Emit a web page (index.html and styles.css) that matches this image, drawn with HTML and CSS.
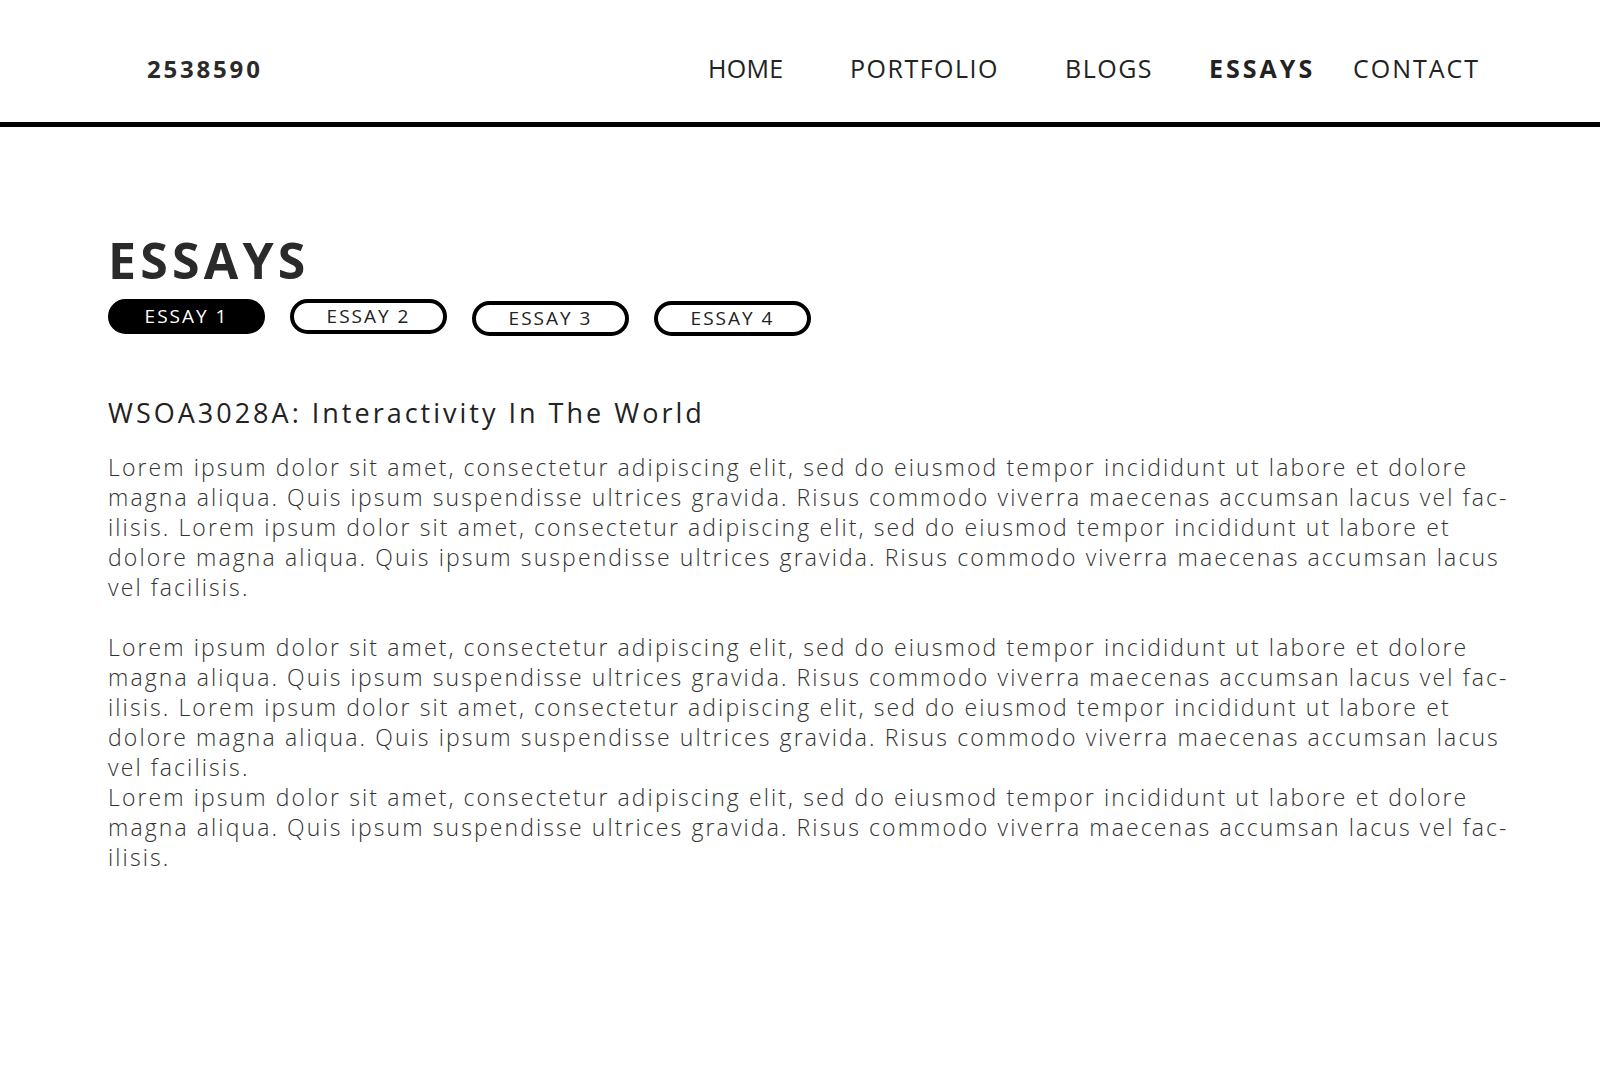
FILE: index.html
```html
<!DOCTYPE html>
<html lang="en">
<head>
<meta charset="utf-8">
<title>Essays</title>
<link rel="stylesheet" href="styles.css">
</head>
<body>
<header class="site-header">
  <div class="logo">2538590</div>
  <nav class="nav">
    <a class="nav-link" href="#">HOME</a>
    <a class="nav-link" href="#">PORTFOLIO</a>
    <a class="nav-link" href="#">BLOGS</a>
    <a class="nav-link nav-link--active" href="#">ESSAYS</a>
    <a class="nav-link" href="#">CONTACT</a>
  </nav>
</header>
<main class="content">
  <h1 class="page-title">ESSAYS</h1>
  <div class="tabs">
    <button class="tab tab--active">ESSAY 1</button>
    <button class="tab">ESSAY 2</button>
    <button class="tab tab--low">ESSAY 3</button>
    <button class="tab tab--low">ESSAY 4</button>
  </div>
  <h2 class="essay-title">WSOA3028A: Interactivity In The World</h2>
  <p class="essay-text essay-text--spaced">Lorem ipsum dolor sit amet, consectetur adipiscing elit, sed do eiusmod tempor incididunt ut labore et dolore<br>magna aliqua. Quis ipsum suspendisse ultrices gravida. Risus commodo viverra maecenas accumsan lacus vel fac-<br>ilisis. Lorem ipsum dolor sit amet, consectetur adipiscing elit, sed do eiusmod tempor incididunt ut labore et<br>dolore magna aliqua. Quis ipsum suspendisse ultrices gravida. Risus commodo viverra maecenas accumsan lacus<br>vel facilisis.</p>
  <p class="essay-text">Lorem ipsum dolor sit amet, consectetur adipiscing elit, sed do eiusmod tempor incididunt ut labore et dolore<br>magna aliqua. Quis ipsum suspendisse ultrices gravida. Risus commodo viverra maecenas accumsan lacus vel fac-<br>ilisis. Lorem ipsum dolor sit amet, consectetur adipiscing elit, sed do eiusmod tempor incididunt ut labore et<br>dolore magna aliqua. Quis ipsum suspendisse ultrices gravida. Risus commodo viverra maecenas accumsan lacus<br>vel facilisis.</p>
  <p class="essay-text">Lorem ipsum dolor sit amet, consectetur adipiscing elit, sed do eiusmod tempor incididunt ut labore et dolore<br>magna aliqua. Quis ipsum suspendisse ultrices gravida. Risus commodo viverra maecenas accumsan lacus vel fac-<br>ilisis.</p>
</main>
</body>
</html>
```
FILE: styles.css
```css
* { box-sizing: border-box; }
body {
  margin: 0;
  font-family: "Open Sans", "Liberation Sans", sans-serif;
  background: #fff;
  color: #222;
}
.site-header {
  display: flex;
  align-items: center;
  height: 127px;
  padding: 20px 0 5px 147px;
  border-bottom: 5px solid #000;
}
.logo {
  width: 561px;
  font-size: 24px;
  font-weight: 700;
  letter-spacing: 2.8px;
  line-height: 1;
  color: #2a2a2a;
}
.nav {
  display: grid;
  grid-template-columns: 142px 215px 144px 144px auto;
}
.nav-link {
  font-size: 25px;
  line-height: 1;
  letter-spacing: 1.5px;
  color: #222;
  text-decoration: none;
  font-weight: 400;
}
.nav-link:first-child { letter-spacing: 0.3px; }
.nav-link:last-child { letter-spacing: 2px; }
.nav-link--active { font-weight: 700; letter-spacing: 3px; }
.content {
  padding: 108px 0 0 108px;
}
.page-title {
  margin: 0;
  font-size: 50px;
  line-height: 1;
  font-weight: 700;
  letter-spacing: 4.2px;
  color: #2a2a2a;
}
.tabs {
  display: flex;
  align-items: flex-start;
  gap: 25px;
  margin-top: 14px;
}
.tab {
  width: 157px;
  height: 35px;
  border: 4px solid #000;
  border-radius: 18px;
  background: #fff;
  color: #222;
  font-family: inherit;
  font-size: 19px;
  letter-spacing: 2px;
  line-height: 1;
  padding: 0;
}
.tab--active { background: #000; color: #fff; }
.tab--low { margin-top: 2px; }
.essay-title {
  margin: 63px 0 0;
  font-size: 27px;
  line-height: 1;
  font-weight: 400;
  letter-spacing: 3px;
  color: #222;
}
.essay-text {
  margin: 26px 0 0;
  font-size: 23px;
  line-height: 30px;
  font-weight: 300;
  letter-spacing: 2.1px;
  color: #333;
  white-space: nowrap;
}
.essay-text + .essay-text { margin-top: 0; }
.essay-text--spaced { margin-bottom: 30px; }
```
